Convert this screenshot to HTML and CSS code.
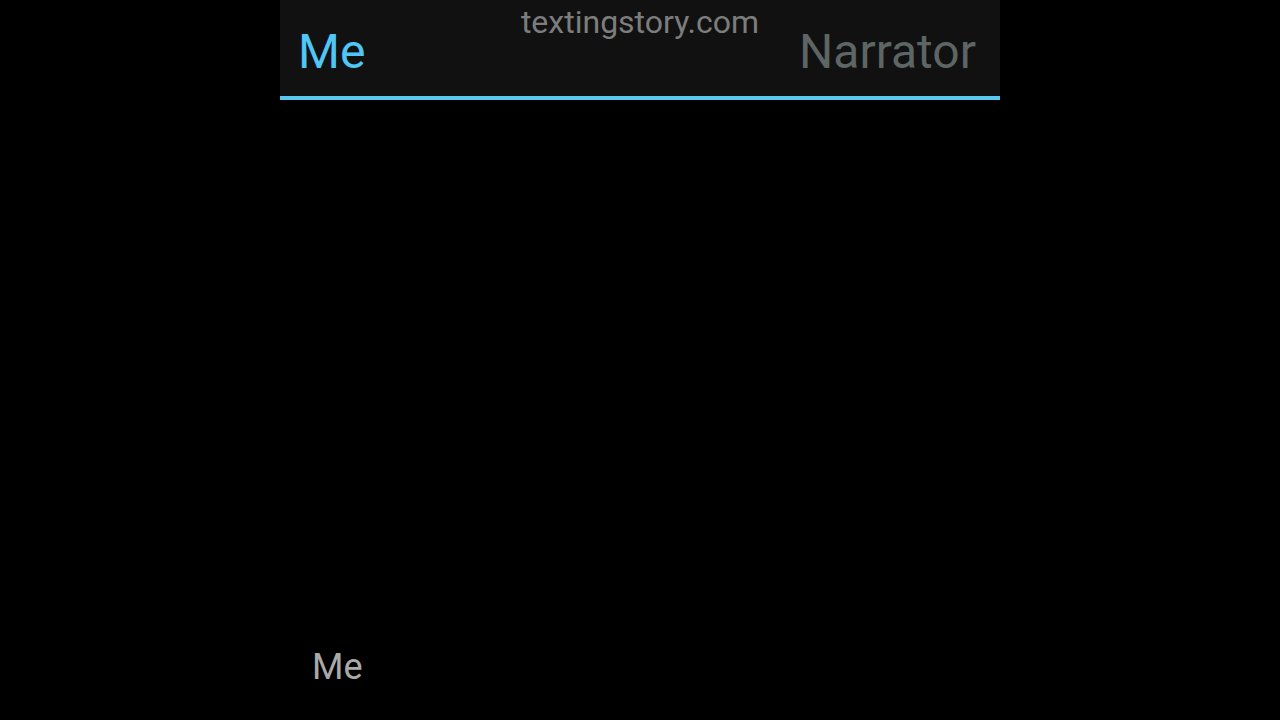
FILE: index.html
```html
<!DOCTYPE html>
<html lang="en">
<head>
    <meta charset="UTF-8">
    <meta name="viewport" content="width=device-width, initial-scale=1.0">
    <title>Texting Story</title>
    <link rel="stylesheet" href="styles.css">
</head>
<body>
    <div class="phone">
        <div class="header">
            <span class="tab active">Me</span>
            <span class="tab">Narrator</span>
            <span class="watermark">textingstory.com</span>
        </div>
        <div class="chat"></div>
        <div class="typing">Me</div>
    </div>
</body>
</html>
```

FILE: styles.css
```css
body {
    margin: 0;
    background: #000;
    font-family: Roboto, "Liberation Sans", sans-serif;
    height: 100vh;
    overflow: hidden;
}

.phone {
    width: 720px;
    height: 720px;
    margin: 0 auto;
    display: flex;
    flex-direction: column;
}

.header {
    position: relative;
    height: 96px;
    background-color: #111;
    border-bottom: 4px solid #5ac8ee;
    display: flex;
    justify-content: space-between;
    align-items: center;
    padding: 0 24px 0 18px;
}

.tab {
    font-size: 48px;
    color: #5d6565;
    line-height: 1;
    margin-top: 8px;
}

.tab.active {
    color: #4fc6f5;
}

.watermark {
    position: absolute;
    top: 3px;
    left: 0;
    right: 0;
    text-align: center;
    font-size: 32px;
    line-height: 1.2;
    color: #7d7d7d;
}

.chat {
    flex: 1;
}

.typing {
    font-size: 36px;
    color: #a9a9a9;
    padding: 0 0 35px 32px;
    line-height: 1;
}
```
